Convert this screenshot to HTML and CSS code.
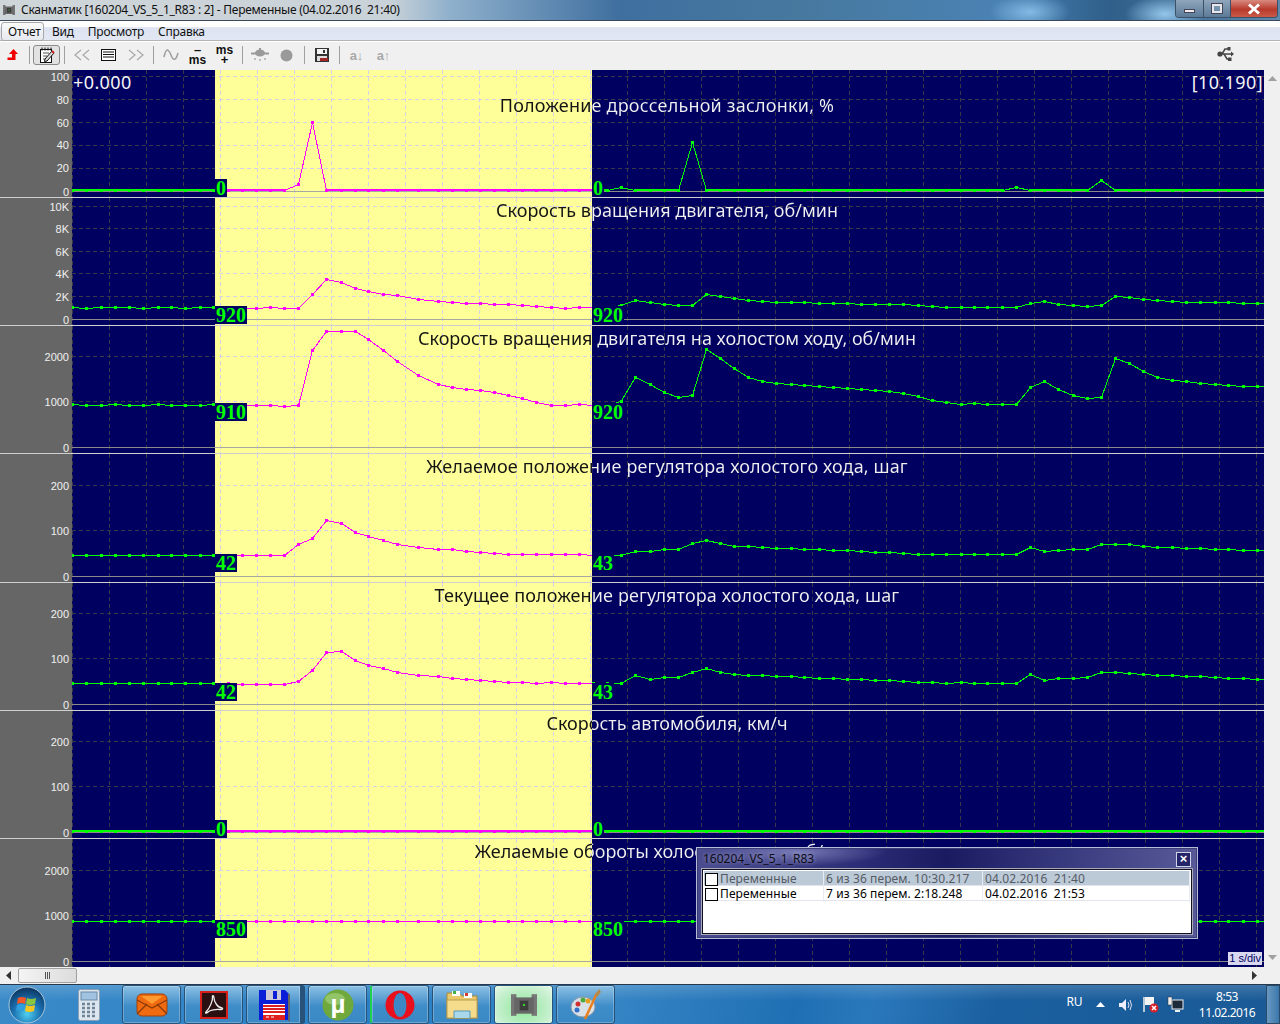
FILE: index.html
```html
<!DOCTYPE html>
<html lang="ru">
<head>
<meta charset="utf-8">
<title>Сканматик</title>
<link rel="stylesheet" href="styles.css">
</head>
<body>
<svg class="defs" width="0" height="0">
  <defs>
    <marker id="mk-g" markerUnits="userSpaceOnUse" markerWidth="3" markerHeight="3" refX="1.5" refY="1.5"><rect class="crisp" width="3" height="3" fill="#00ff00"/></marker>
    <marker id="mk-m" markerUnits="userSpaceOnUse" markerWidth="3" markerHeight="3" refX="1.5" refY="1.5"><rect class="crisp" width="3" height="3" fill="#ff00ff"/></marker>
    <clipPath id="clip-in"><rect x="215" y="0" width="377" height="1024"/></clipPath>
    <symbol id="chip" viewBox="0 0 24 24">
      <rect x="0" y="2" width="5" height="20" fill="#777"/><rect x="19" y="2" width="5" height="20" fill="#777"/>
      <rect x="3" y="5" width="18" height="15" fill="#666"/><rect x="8" y="8" width="8" height="9" fill="#3c3c3c"/>
      <rect x="11" y="11" width="2" height="2" fill="#2fd02f"/>
    </symbol>
  </defs>
</svg>
<div class="window">
  <header class="titlebar">
    <svg class="title-icon" width="12" height="12"><use href="#chip"/></svg>
    <span class="title-text">Сканматик [160204_VS_5_1_R83 : 2] - Переменные (04.02.2016  21:40)</span>
    <div class="win-controls">
      <span class="win-btn win-min"><i></i></span>
      <span class="win-btn win-max"><i></i></span>
      <span class="win-btn win-close">
        <svg width="14" height="12" viewBox="0 0 14 12"><path d="M2 1.5 L12 10.5 M12 1.5 L2 10.5" stroke="#fff" stroke-width="3"/></svg>
      </span>
    </div>
  </header>

  <nav class="menubar">
    <span class="menu-item menu-active">Отчет</span>
    <span class="menu-item">Вид</span>
    <span class="menu-item">Просмотр</span>
    <span class="menu-item">Справка</span>
  </nav>

  <div class="toolbar">
    <span class="tb-btn tb-first"><svg width="12" height="12" viewBox="0 0 12 12"><path d="M6.5 0 L11 5 L8.5 5 L8.5 11 L0.5 11 L0.5 8.5 L5 8.5 L5 5 L2 5 Z" fill="#f00000"/></svg></span>
    <span class="tb-sep"></span>
    <span class="tb-btn tb-checked"><svg width="18" height="18" viewBox="0 0 18 18"><rect x="2.5" y="3.5" width="11" height="13" fill="#fff" stroke="#111"/><path d="M4 1.5v3M7 1.5v3M10 1.5v3M13 1.5v3" stroke="#111"/><path d="M5 7h6M5 10h4M5 13h3" stroke="#555"/><path d="M7 13 L14 5 L16 7 L9 15 L6.5 15.5 Z" fill="#ddd" stroke="#111"/><path d="M14 5l2 2" stroke="#c22" stroke-width="2"/></svg></span>
    <span class="tb-sep"></span>
    <span class="tb-btn"><svg width="16" height="12" viewBox="0 0 16 12"><path d="M7 1 L1 6 L7 11 M15 1 L9 6 L15 11" fill="none" stroke="#a8a8a8" stroke-width="1.2"/></svg></span>
    <span class="tb-btn"><svg width="15" height="12" viewBox="0 0 15 12"><rect x="0.5" y="0.5" width="14" height="11" fill="#fff" stroke="#111"/><path d="M2 3h11M2 5.5h11M2 8h11" stroke="#111" stroke-width="1.2"/></svg></span>
    <span class="tb-btn"><svg width="16" height="12" viewBox="0 0 16 12"><path d="M1 1 L7 6 L1 11 M9 1 L15 6 L9 11" fill="none" stroke="#a8a8a8" stroke-width="1.2"/></svg></span>
    <span class="tb-sep"></span>
    <span class="tb-btn"><svg width="16" height="14" viewBox="0 0 16 14"><path d="M1 9 C3 0 5 0 8 7 C10 13 13 13 15 5" fill="none" stroke="#a0a0a0" stroke-width="1.6"/></svg></span>
    <span class="tb-btn tb-ms"><span class="ms-top">–</span><span class="ms-low">ms</span></span>
    <span class="tb-btn tb-ms"><span class="ms-low">ms</span><span class="ms-top">+</span></span>
    <span class="tb-sep"></span>
    <span class="tb-btn"><svg width="18" height="14" viewBox="0 0 18 14"><ellipse cx="9" cy="5" rx="5" ry="3.500" fill="#9a9a9a"/><path d="M0 4.500h18v2H0z" fill="#9a9a9a"/><path d="M8 0h2v3H8z" fill="#9a9a9a"/><path d="M4 10v2M9 11v2M14 10v2" stroke="#aaa" stroke-width="1.500"/></svg></span>
    <span class="tb-btn"><svg width="13" height="13" viewBox="0 0 13 13"><circle cx="6.5" cy="6.5" r="6" fill="#9a9a9a"/></svg></span>
    <span class="tb-sep"></span>
    <span class="tb-btn"><svg width="14" height="14" viewBox="0 0 14 14"><rect width="14" height="14" fill="#333"/><rect x="2" y="1" width="10" height="5" fill="#f4f4f4"/><rect x="8" y="2" width="2" height="3" fill="#333"/><rect x="2" y="8" width="10" height="5" fill="#ddd"/><rect x="5" y="10" width="8" height="3" fill="#a02828"/></svg></span>
    <span class="tb-sep"></span>
    <span class="tb-btn tb-az">a↓</span>
    <span class="tb-btn tb-az">a↑</span>
    <span class="tb-usb"><svg width="17" height="16" viewBox="0 0 17 16"><path d="M3 7 H15 M5 7 L8 2 H11 M7 7 L10 12 H12" fill="none" stroke="#444" stroke-width="1.5"/><circle cx="3" cy="7" r="2.6" fill="#444"/><rect x="10.500" y="0" width="3" height="3.500" fill="#444"/><rect x="11" y="10.500" width="3.500" height="3.500" fill="#444"/><path d="M14 4.500 L17 7 L14 9.500 Z" fill="#444"/></svg></span>
  </div>

  <main class="workspace">
    <div class="chart">
      <section class="panel">
        <div class="axis">
          <span class="tick" style="top:7px">100</span><span class="tick" style="top:30px">80</span><span class="tick" style="top:53px">60</span><span class="tick" style="top:75px">40</span><span class="tick" style="top:98px">20</span><span class="tick" style="top:122px">0</span>
        </div>
        <div class="plot">
          <svg class="trace"></svg>
          <span class="time time-left">+0.000</span>
          <span class="time time-right">[10.190]</span>
          <h2 class="plot-title plot-title-first">Положение дроссельной заслонки, %</h2>
          <span class="val val-left" style="top:108px">0</span>
          <span class="val val-right" style="top:108px">0</span>
        </div>
      </section>
      <section class="panel">
        <div class="axis">
          <span class="tick" style="top:9px">10K</span><span class="tick" style="top:31px">8K</span><span class="tick" style="top:54px">6K</span><span class="tick" style="top:76px">4K</span><span class="tick" style="top:99px">2K</span><span class="tick" style="top:122px">0</span>
        </div>
        <div class="plot">
          <svg class="trace"></svg>
          <h2 class="plot-title">Скорость вращения двигателя, об/мин</h2>
          <span class="val val-left" style="top:107px">920</span>
          <span class="val val-right" style="top:107px">920</span>
        </div>
      </section>
      <section class="panel">
        <div class="axis">
          <span class="tick" style="top:31px">2000</span><span class="tick" style="top:76px">1000</span><span class="tick" style="top:122px">0</span>
        </div>
        <div class="plot">
          <svg class="trace"></svg>
          <h2 class="plot-title">Скорость вращения двигателя на холостом ходу, об/мин</h2>
          <span class="val val-left" style="top:76px">910</span>
          <span class="val val-right" style="top:76px">920</span>
        </div>
      </section>
      <section class="panel panel-tall">
        <div class="axis">
          <span class="tick" style="top:32px">200</span><span class="tick" style="top:77px">100</span><span class="tick" style="top:123px">0</span>
        </div>
        <div class="plot">
          <svg class="trace"></svg>
          <h2 class="plot-title plot-title-wide">Желаемое положение регулятора холостого хода, шаг</h2>
          <span class="val val-left" style="top:99px">42</span>
          <span class="val val-right" style="top:99px">43</span>
        </div>
      </section>
      <section class="panel">
        <div class="axis">
          <span class="tick" style="top:31px">200</span><span class="tick" style="top:76px">100</span><span class="tick" style="top:122px">0</span>
        </div>
        <div class="plot">
          <svg class="trace"></svg>
          <h2 class="plot-title plot-title-wide">Текущее положение регулятора холостого хода, шаг</h2>
          <span class="val val-left" style="top:99px">42</span>
          <span class="val val-right" style="top:99px">43</span>
        </div>
      </section>
      <section class="panel">
        <div class="axis">
          <span class="tick" style="top:31px">200</span><span class="tick" style="top:76px">100</span><span class="tick" style="top:122px">0</span>
        </div>
        <div class="plot">
          <svg class="trace"></svg>
          <h2 class="plot-title">Скорость автомобиля, км/ч</h2>
          <span class="val val-left" style="top:108px">0</span>
          <span class="val val-right" style="top:108px">0</span>
        </div>
      </section>
      <section class="panel panel-last">
        <div class="axis">
          <span class="tick" style="top:32px">2000</span><span class="tick" style="top:77px">1000</span><span class="tick" style="top:123px">0</span>
        </div>
        <div class="plot">
          <svg class="trace"></svg>
          <h2 class="plot-title">Желаемые обороты холостого хода, об/мин</h2>
          <span class="val val-left" style="top:80px">850</span>
          <span class="val val-right" style="top:80px">850</span>
          <span class="scale-tag">1 s/div</span>
        </div>
      </section>
    </div>
    <aside class="vscroll">
      <svg width="9" height="5" viewBox="0 0 9 5"><path d="M4.500 0 L9 5 H0 Z" fill="#a0a0a0"/></svg>
      <svg width="9" height="5" viewBox="0 0 9 5"><path d="M4.500 5 L9 0 H0 Z" fill="#a0a0a0"/></svg>
    </aside>
  </main>

  <div class="hscroll">
    <svg class="hs-arrow" width="5" height="9" viewBox="0 0 5 9"><path d="M0 4.500 L5 0 V9 Z" fill="#333"/></svg>
    <span class="hs-thumb"><i></i><i></i><i></i></span>
    <svg class="hs-arrow hs-arrow-right" width="5" height="9" viewBox="0 0 5 9"><path d="M5 4.500 L0 0 V9 Z" fill="#333"/></svg>
  </div>

  <footer class="taskbar">
    <span class="orb">
      <svg width="38" height="38" viewBox="0 0 38 38">
        <defs><radialGradient id="orbg" cx="50%" cy="75%" r="70%"><stop offset="0" stop-color="#4fd0f0"/><stop offset="0.55" stop-color="#1a6fb0"/><stop offset="1" stop-color="#0d3a66"/></radialGradient></defs>
        <circle cx="19" cy="19" r="18" fill="url(#orbg)" stroke="#a8c8de" stroke-width="1"/>
        <path d="M10 12 Q14 10 18 12 L17 18 Q13 16 9 18 Z" fill="#f0582a"/>
        <path d="M19 12 Q23 14 28 12 L27 18 Q22 20 18 18 Z" fill="#8cc63f"/>
        <path d="M9 19 Q13 17 17 19 L16 25 Q12 23 8 25 Z" fill="#2f9fe0"/>
        <path d="M18 19 Q22 21 27 19 L26 25 Q21 27 17 25 Z" fill="#f6c620"/>
      </svg>
    </span>
    <span class="quick">
      <svg width="22" height="32" viewBox="0 0 22 32"><rect x="0.500" y="0.500" width="21" height="31" rx="2" fill="#dde6ee" stroke="#8aa0b4"/><rect x="3" y="3" width="16" height="8" fill="#9fc3e0" stroke="#6a8aa6"/><path d="M4 15h3M9 15h3M14 15h3M4 19h3M9 19h3M14 19h3M4 23h3M9 23h3M14 23h3M4 27h3M9 27h3M14 27h3" stroke="#708498" stroke-width="2.500"/></svg>
    </span>
    <div class="tasks">
      <span class="task">
        <svg width="32" height="24" viewBox="0 0 32 24"><rect x="1" y="1" width="30" height="22" rx="5" fill="#f06a10" stroke="#a04008"/><path d="M1 7 L16 15 L31 7 M1 21 L11 11 M31 21 L21 11" fill="none" stroke="#8a3a08" stroke-width="1.300"/><path d="M5 3h22l-11 8z" fill="#ff9a30"/></svg>
      </span>
      <span class="task">
        <svg width="28" height="28" viewBox="0 0 28 28"><rect x="1" y="1" width="26" height="26" fill="#2a1010" stroke="#d8201a" stroke-width="2"/><path d="M6 21 C10 17 13 9 12.500 6 C12 4 14 4 14 7 C14 11 18 17 22 17 C23 17 23 19 20 18.500 C16 18 10 19 8 21 C6 23 5 22 6 21 Z" fill="none" stroke="#eee" stroke-width="1.300"/></svg>
      </span>
      <span class="task task-split">
        <svg width="32" height="32" viewBox="0 0 32 32"><path d="M1 1h26l4 4v26H1z" fill="#0a1ed8"/><rect x="8" y="1" width="15" height="10" fill="#c8c8d8"/><rect x="15" y="2" width="4" height="8" fill="#0a1ed8"/><rect x="5" y="15" width="22" height="16" fill="#fff"/><path d="M5 17h22M5 20h22M5 23h22" stroke="#e02020" stroke-width="2"/><rect x="5" y="26" width="22" height="5" fill="#e02020"/><path d="M8 28h3M13 28h3" stroke="#fff"/><rect x="30" y="5" width="2" height="27" fill="#666"/></svg>
      </span>
      <span class="task">
        <svg width="32" height="32" viewBox="0 0 32 32"><circle cx="16" cy="16" r="15.500" fill="#6fa83c"/><ellipse cx="13" cy="10" rx="10" ry="6" fill="#94c468"/><text x="16" y="24" class="torrent-mu">µ</text></svg>
      </span>
      <span class="task task-edge">
        <svg width="30" height="30" viewBox="0 0 30 30"><ellipse cx="15" cy="15" rx="14.500" ry="14.500" fill="#e8101c"/><ellipse cx="15" cy="15" rx="6.500" ry="12" fill="#3d88c4"/></svg>
      </span>
      <span class="task">
        <svg width="34" height="30" viewBox="0 0 34 30"><path d="M2 3h12l3 3h15v22H2z" fill="#e8c86a" stroke="#a8883c"/><rect x="7" y="1" width="8" height="5" fill="#fff"/><rect x="8" y="1" width="3" height="3" fill="#44b044"/><rect x="19" y="3" width="8" height="5" fill="#fff"/><rect x="20" y="3" width="3" height="3" fill="#d03c2c"/><rect x="2" y="10" width="30" height="18" fill="#f4dc8c" stroke="#b89c50"/><path d="M9 28v-7h16v7" fill="#a8d8ea" stroke="#5a98b8"/></svg>
      </span>
      <span class="task task-active">
        <svg width="26" height="26"><use href="#chip"/></svg>
      </span>
      <span class="task">
        <svg width="32" height="32" viewBox="0 0 32 32"><ellipse cx="13" cy="18" rx="12" ry="10" fill="#d8e0e8" stroke="#8a9aaa"/><circle cx="8" cy="15" r="2.500" fill="#d03030"/><circle cx="13" cy="11" r="2.500" fill="#4aa83c"/><circle cx="18" cy="12" r="2.500" fill="#e8a020"/><circle cx="7" cy="21" r="2.500" fill="#3070c8"/><path d="M15 30 L27 4" stroke="#e88020" stroke-width="2.500"/><path d="M25 6 L29 0 L31 3 L27 8 Z" fill="#b88848"/></svg>
      </span>
    </div>
    <div class="tray">
      <span class="tray-item tray-lang">RU</span>
      <span class="tray-item"><svg width="9" height="5" viewBox="0 0 9 5"><path d="M4.500 0 L9 5 H0 Z" fill="#fff"/></svg></span>
      <span class="tray-item"><svg width="16" height="16" viewBox="0 0 16 16"><path d="M1 6h3l4-4v12l-4-4H1z" fill="#eef"/><path d="M10 5q2 3 0 6M12 3q3 5 0 10" fill="none" stroke="#dde" stroke-width="1"/></svg></span>
      <span class="tray-item"><svg width="17" height="17" viewBox="0 0 17 17"><path d="M2 1v15" stroke="#eee" stroke-width="1.500"/><path d="M3 1h9v8H3z" fill="#f4f4f4"/><circle cx="12" cy="12" r="4.500" fill="#d8202a"/><path d="M10 10l4 4M14 10l-4 4" stroke="#fff" stroke-width="1.500"/></svg></span>
      <span class="tray-item"><svg width="17" height="17" viewBox="0 0 17 17"><rect x="5" y="4" width="11" height="9" fill="#1c2a3a" stroke="#eee"/><path d="M8 15h5" stroke="#eee" stroke-width="2"/><rect x="1" y="1" width="4" height="8" fill="#eee" stroke="#333" stroke-width="0.500"/></svg></span>
      <span class="clock"><span>8:53</span><span>11.02.2016</span></span>
      <span class="show-desktop"></span>
    </div>
  </footer>
</div>

<div class="popup">
  <div class="popup-head">
    <span class="popup-title">160204_VS_5_1_R83</span>
    <span class="popup-close">×</span>
  </div>
  <div class="popup-list">
    <div class="row row-selected">
      <span class="cell cell-name"><i class="check"></i>Переменные</span>
      <span class="cell">6 из 36 перем. 10:30.217</span>
      <span class="cell">04.02.2016  21:40</span>
    </div>
    <div class="row">
      <span class="cell cell-name"><i class="check"></i>Переменные</span>
      <span class="cell">7 из 36 перем. 2:18.248</span>
      <span class="cell">04.02.2016  21:53</span>
    </div>
  </div>
</div>
<script src="script.js"></script>
</body>
</html>
```

FILE: styles.css
```css
* { box-sizing: border-box; }
html, body { margin: 0; padding: 0; }
body {
  width: 1280px; height: 1024px; overflow: hidden; position: relative;
  font-family: "Noto Sans", "Liberation Sans", sans-serif; font-size: 12px; color: #111;
  background: #f0f0f0;
}
.defs { position: absolute; }
.crisp { shape-rendering: crispEdges; }
.window { display: flex; flex-direction: column; height: 1024px; }

/* title bar */
.titlebar {
  height: 21px; display: flex; align-items: center; padding-left: 3px; position: relative;
  background:
    radial-gradient(ellipse 40px 18px at 1030px 12px, rgba(160,215,255,.7), transparent),
    radial-gradient(ellipse 40px 18px at 1165px 14px, rgba(170,220,255,.8), transparent),
    linear-gradient(90deg, #cfd6da 0, #c9d2d8 390px, #8fb0cc 450px, #3f6f9f 620px, #47799f 800px, #4a82b4 1000px, #2f5f8a 1110px, #5e88ac 1280px);
  border-bottom: 1px solid #3a4a5a;
}
.title-icon { margin-right: 6px; }
.title-text { white-space: pre; font-size: 12px; line-height: 20px; color: #111; letter-spacing: -.26px; }
.win-controls { position: absolute; left: 1175px; top: 0; display: flex; height: 18px; border: 1px solid #3c5068; border-top: 0; border-radius: 0 0 4px 4px; overflow: hidden; }
.win-btn { display: flex; align-items: center; justify-content: center; background: linear-gradient(#8fa6bc, #5c7a98); border-right: 1px solid #3c5068; }
.win-min { width: 28px; }
.win-min i { width: 11px; height: 4px; margin-top: 4px; background: #eee; border: 1px solid #445; display: block; }
.win-max { width: 27px; }
.win-max i { width: 10px; height: 9px; background: transparent; border: 2px solid #e4e8ee; outline: 1px solid #445; display: block; }
.win-close { width: 46px; border-right: 0; background: linear-gradient(#d98a80, #b83a2c 55%, #c85a48); }

/* menu */
.menubar {
  height: 20px; display: flex; align-items: center; padding: 2px 0 0 1px;
  background: linear-gradient(#ffffff 0, #ffffff 30%, #dde3f1 35%, #e2e7f3 100%);
  border-bottom: 1px solid #b4b4b4;
}
.menu-item { padding: 0 7px; line-height: 17px; font-size: 12px; letter-spacing: -.25px; }
.menu-active { border: 1px solid #a8a8a8; border-radius: 3px; background: linear-gradient(#fafafa, #e6e9f0); padding: 0 6px; width: 43px; margin-right: 1px; }

/* toolbar */
.toolbar { height: 29px; display: flex; align-items: center; padding-bottom: 2px; background: #f0f0f0; border-top: 1px solid #fff; }
.tb-btn { width: 27px; height: 20px; display: flex; align-items: center; justify-content: center; flex: none; }
.tb-first { width: 25px; }
.tb-checked { border: 1px solid #8a8a8a; border-radius: 3px; background: #e2e2e2; }
.tb-sep { width: 1px; height: 18px; margin: 0 3px 0 4px; background: #a0a0a0; flex: none; }
.tb-ms { flex-direction: column; font: 700 12px/10px "Liberation Sans", sans-serif; color: #111; }
.ms-top { font-size: 13px; line-height: 10px; }
.ms-low { line-height: 10px; }
.tb-az { font: 700 13px "Liberation Sans", sans-serif; color: #a8a8a8; }
.tb-usb { margin-left: auto; margin-right: 46px; display: flex; }

/* chart */
.workspace { height: 897px; display: flex; }
.chart { width: 1264px; display: flex; flex-direction: column; }
.panel { height: 128px; display: flex; flex: none; position: relative; border-bottom: 1px solid #cfcfcf; }
.panel-tall { height: 129px; }
.panel-last { border-bottom: 0; }
.axis { width: 72px; flex: none; background: #666; position: relative; }
.tick { position: absolute; right: 3px; transform: translateY(-50%); font: 11px/12px "Liberation Sans", sans-serif; color: #f0f0f0; }
.plot { flex: 1; position: relative; background: #000060; }
.trace { position: absolute; left: 0; top: 0; width: 1192px; height: 100%; display: block; }
.trace polyline, .trace path { fill: none; shape-rendering: crispEdges; stroke-width: 1; }
.trace line { shape-rendering: crispEdges; }
.grid-dark { stroke: #38384a; stroke-dasharray: 4 3; }
.grid-light { stroke: #d4d4e8; stroke-dasharray: 4 3; }
.zero-line { stroke: #8a8a8a; }
.zero-line-in { stroke: #a8a8a0; }
.tr-green { stroke: #00ff00; marker: url(#mk-g); }
.tr-mag { stroke: #ff00ff; marker: url(#mk-m); }
.base-green { stroke: #00ff00; }
.base-mag { stroke: #ff00ff; }
.plot-title {
  position: absolute; left: 0; top: 1px; width: 1190px; margin: 0; text-align: center; white-space: nowrap;
  font: 400 18px/22px "Noto Sans", sans-serif; color: transparent;
  background: linear-gradient(90deg, #f0f0f0 143px, #141414 143px, #141414 520px, #f0f0f0 520px);
  -webkit-background-clip: text; background-clip: text;
}
.plot-title-first { top: 24px; letter-spacing: .2px; }
.plot-title-wide { letter-spacing: .12px; }
.time { position: absolute; top: 1px; color: #f4f4f4; font: 18px/22px "Noto Sans", sans-serif; letter-spacing: .4px; }
.time-left { left: 1px; }
.time-right { right: 1px; }
.val { position: absolute; height: 18px; margin-top: 1px; padding: 0 1px; background: #000060; color: #00ff00; font: 700 20px/18px "Liberation Serif", serif; }
.val-left { left: 143px; }
.val-right { left: 520px; }
.scale-tag { position: absolute; right: 2px; top: 113px; height: 13px; padding: 0 1px; background: #d8d8f0; color: #000060; font: 11px/13px "Liberation Sans", sans-serif; }

.vscroll { width: 16px; background: #f0f0f0; display: flex; flex-direction: column; align-items: center; justify-content: space-between; padding: 6px 0 7px; }

.hscroll { height: 17px; position: relative; display: flex; align-items: center; background: #f0f0f0; padding-left: 6px; }
.hs-thumb { width: 59px; height: 15px; margin-left: 7px; display: flex; align-items: center; justify-content: center; gap: 1px; border: 1px solid #a0a0a0; border-radius: 2px; background: linear-gradient(90deg, #f4f4f4, #dcdcdc); }
.hs-thumb i { width: 1px; height: 7px; background: #555; display: block; }
.hs-arrow-right { margin-left: auto; margin-right: 23px; }

/* taskbar */
.taskbar {
  height: 40px; display: flex; align-items: stretch; position: relative; color: #fff;
  border-top: 1px solid #26384c;
  background:
    linear-gradient(180deg, rgba(255,255,255,.16), rgba(255,255,255,0) 40%),
    linear-gradient(100deg, #3a8ac8 0, #2a7fc4 30%, #3584c4 48%, #1f6fb4 62%, #2a78bc 68%, #1a5f9f 78%, #1a5a96 100%);
}
.orb { width: 54px; display: flex; align-items: center; justify-content: center; flex: none; }
.quick { width: 68px; flex: none; display: flex; align-items: center; padding-left: 24px; }
.tasks { display: flex; gap: 3px; flex: none; }
.task {
  width: 59px; height: 39px; display: flex; align-items: center; justify-content: center; flex: none;
  border: 1px solid #27527a; border-radius: 3px;
  background: linear-gradient(#8cc0e4, #3e8cc8 55%, #3a88c4);
  box-shadow: inset 0 0 0 1px rgba(255,255,255,.25);
}
.task-split { border-right-width: 5px; }
.task-edge { border-left: 2px solid #20d050; }
.task-active { background: radial-gradient(ellipse at 50% 60%, #8fe89a, #c8f0d0 70%, #e8f8e8); }
.torrent-mu { font: 700 26px "Liberation Sans", sans-serif; fill: #fff; text-anchor: middle; }
.tray { margin-left: auto; display: flex; align-items: center; }
.tray-item { width: 25px; display: flex; justify-content: center; align-items: center; }
.tray-lang { margin-right: 1px; font-size: 12px; line-height: 14px; margin-top: -5px; }
.clock { width: 58px; margin: 0 10px; display: flex; flex-direction: column; align-items: center; gap: 1px; font: 12px/15px "Noto Sans", sans-serif; white-space: nowrap; letter-spacing: -.5px; }
.show-desktop { width: 14px; align-self: stretch; border: 1px solid #2a4a6a; background: linear-gradient(90deg, #6a98c0, #3a78ac); }

/* floating list window */
.popup {
  position: absolute; left: 696px; top: 847px; width: 502px; height: 92px; padding: 4px 5px 5px;
  border: 1px solid #b4bcd8; box-shadow: inset 0 0 0 1px #3c3c78;
  background:
    radial-gradient(ellipse 90px 14px at 100px 4px, rgba(170,175,225,.55), transparent),
    linear-gradient(90deg, #4a4c90, #2a2a74 35%, #1a1a60 50%, #3a3c80 75%, #585a98);
}
.popup-head { height: 17px; display: flex; align-items: flex-start; justify-content: space-between; }
.popup-title { font-size: 12px; line-height: 14px; color: #0c0c18; text-shadow: 0 0 4px rgba(220,220,240,.6); margin-left: 1px; }
.popup-close { width: 15px; height: 15px; margin-right: 1px; border: 1px solid #cfd4e8; background: #24246a; color: #fff; font: 700 13px/12px "Liberation Sans", sans-serif; text-align: center; }
.popup-list { height: 65px; padding: 1px; background: #fff; border: 1px solid #101020; box-shadow: 0 0 0 1px #aab; }
.row { display: grid; grid-template-columns: 120px 159px 1fr; height: 15px; color: #000; font-size: 12px; line-height: 16px; letter-spacing: .1px; border-bottom: 1px solid #e4e4ee; }
.row-selected { background: #bccad8; color: #555a64; }
.cell { padding-left: 2px; white-space: pre; border-right: 1px solid #e8ecf2; }
.cell-name { display: flex; align-items: center; padding-left: 1px; }
.check { width: 13px; height: 13px; margin-right: 2px; border: 1px solid #000; background: #fff; display: block; flex: none; }
```

FILE: script.js
```js
// Sample times (as page x) shared by every trace, then each trace's samples (as page y).
var XS = [72,86,101,115,129,143.5,158,171,185,200,213.6,228,
  242,256.5,270.5,284.5,298.5,312.5,326.5,341.5,355.5,368.5,383.5,397.5,418.5,438.5,452.5,466.5,480.5,494.5,508.5,522.5,536.5,551.5,565.5,579.5,593.5,607.5,621,
  635.5,650,664.5,678.5,692.5,706.5,720.5,734,748.5,762.5,776.5,791,804.5,819,833.5,847.5,861.5,875.5,889.5,903.5,918.5,932,946.5,961,974,987.5,1002.5,1016.5,1030.5,1044.5,1058.5,1073,1087.5,1101.5,1115.5,1129.5,1143.5,1157.5,1172.5,1186.5,1200.5,1215,1228,1243,1257,1271];

function flat(y, over) {
  return XS.map(function (_, i) { return over && over[i] !== undefined ? over[i] : y; });
}
function rep(v, n) { var a = []; while (n--) a.push(v); return a; }

var PANELS = [
  { top: 70, h: 127, zero: 191, grid: [76, 99, 122, 145, 168], thick: true,
    y: flat(190, {16: 184, 17: 122, 38: 187, 43: 142, 66: 187, 72: 180}) },
  { top: 198, h: 127, zero: 319, grid: [206, 228, 251, 273, 296],
    y: [307,308,307,307,307,308,307,307,308,307,307,307,
        308,308,307,308,308,294,279,282,288,291,294,295,299,301,302,303,303,304,304,305,306,307,308,307,307,307,305,
        300,302,304,305,305,294,296,298,300,301,302,302,302,303,303,303,304,304,304,304,305,306,307,307,307,307,307,307,
        303,301,304,305,306,305,296,297,299,300,301,302,302,302,302,303,303,303] },
  { top: 326, h: 127, zero: 447, grid: [356, 401],
    y: [404,405,405,404,405,405,404,405,405,405,404,405,
        405,405,405,406,405,350,331,331,331,339,350,361,375,384,387,389,390,392,395,398,402,405,405,404,405,405,401,
        377,384,392,397,395,349,358,368,377,381,383,384,385,386,387,388,389,390,391,393,396,400,402,404,403,404,404,404,
        387,381,389,395,398,397,358,363,371,377,380,381,383,384,385,386,386,386] },
  { top: 454, h: 128, zero: 576, grid: [485, 530],
    y: rep(555,16).concat([544,538,520,523,532,536,540,544,547,549,549,551,552,553,554,554,554,554,554,554,555,555,555,
        551,551,549,549,543,540,543,546,546,547,548,548,549,549,550,550,551,552,552,553,554,554,554,554,554,554,554,554,
        547,551,550,549,549,544,544,544,546,547,547,548,548,549,549,550,550,550]) },
  { top: 583, h: 127, zero: 704, grid: [613, 658],
    y: rep(683,12).concat([684,684,684,684,681,670,652,651,660,665,668,672,675,676,678,679,680,681,682,682,683,682,683,683,683,683,683,
        675,679,677,677,672,668,672,674,675,675,676,676,677,678,678,679,679,680,680,681,682,682,683,682,683,683,683,683,
        674,680,678,678,677,672,672,673,674,675,675,676,676,677,678,678,679,679]) },
  { top: 711, h: 127, zero: 832, grid: [741, 786], thick: true, y: flat(831) },
  { top: 839, h: 128, zero: 961, grid: [870, 915], y: flat(921) }
];

function hline(y, cls) { return '<line class="' + cls + '" x1="72" x2="1264" y1="' + (y + .5) + '" y2="' + (y + .5) + '"/>'; }

function gridLines(p, cls) {
  var s = '';
  for (var x = 72.5; x < 1264; x += 37) {
    s += '<line class="' + cls + '" x1="' + x + '" x2="' + x + '" y1="' + p.top + '" y2="' + (p.top + p.h) + '"/>';
  }
  p.grid.forEach(function (y) { s += hline(y, cls); });
  return s;
}

// The level stretches of these traces are two pixels thick: one extra row over each level segment.
function levelRow(p, cls) {
  if (!p.thick) return '';
  var d = '';
  for (var i = 0; i < XS.length - 1; i++) {
    if (p.y[i] === p.y[i + 1]) d += 'M' + XS[i] + ' ' + (p.y[i] - .5) + 'H' + XS[i + 1];
  }
  return '<path class="' + cls + '" d="' + d + '"/>';
}

var svgs = document.querySelectorAll('.trace');
PANELS.forEach(function (p, n) {
  var pts = XS.map(function (x, i) { return x + ',' + (p.y[i] + .5); }).join(' ');
  var svg = svgs[n];
  svg.setAttribute('viewBox', '72 ' + p.top + ' 1192 ' + p.h);
  svg.setAttribute('preserveAspectRatio', 'none');
  svg.innerHTML =
    gridLines(p, 'grid-dark') +
    hline(p.zero, 'zero-line') +
    '<rect x="215" y="' + p.top + '" width="377" height="' + p.h + '" fill="#ffff99"/>' +
    '<g clip-path="url(#clip-in)">' + gridLines(p, 'grid-light') + hline(p.zero, 'zero-line-in') + '</g>' +
    levelRow(p, 'base-green') +
    '<polyline class="tr-green" points="' + pts + '"/>' +
    '<g clip-path="url(#clip-in)">' +
      levelRow(p, 'base-mag') +
      '<polyline class="tr-mag" points="' + pts + '"/>' +
    '</g>';
});
```
